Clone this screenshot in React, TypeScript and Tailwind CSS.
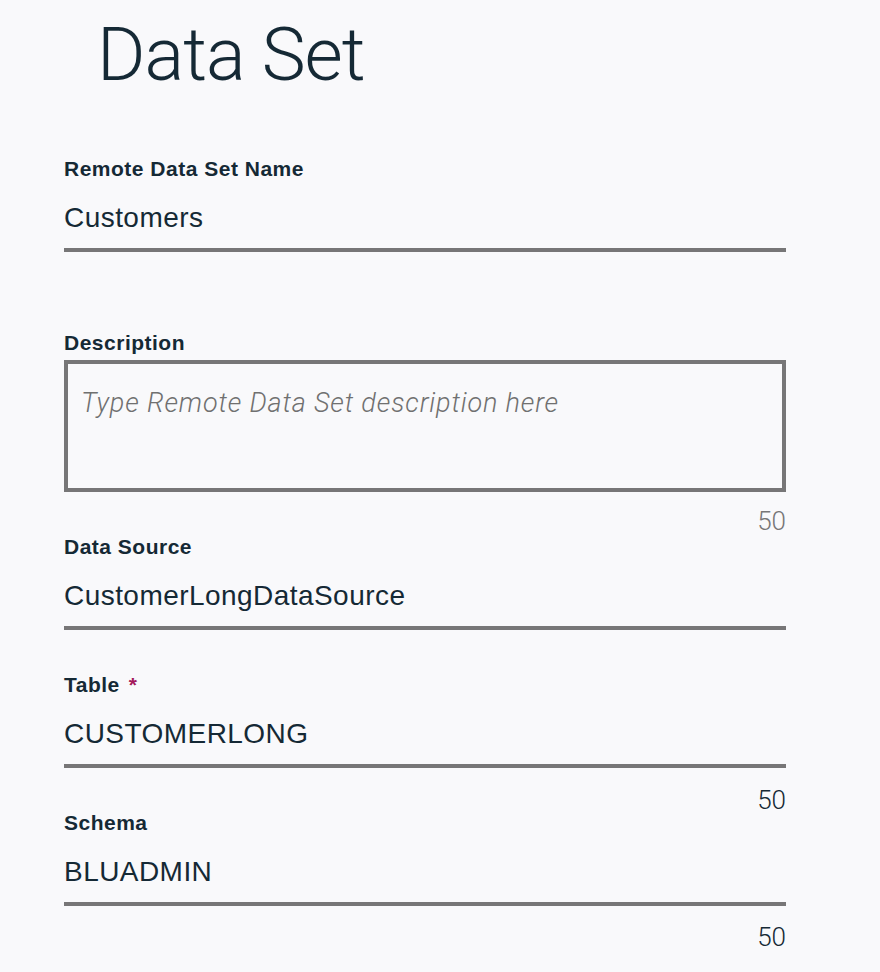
import React from "react";

const sans = "font-['Liberation_Sans',Arial,sans-serif]";
const light = "font-['Roboto','Liberation_Sans',sans-serif] font-light";

function Label({ text, required }: { text: string; required?: boolean }) {
  return (
    <div className={`${sans} h-[24px] text-[21px] leading-[24px] font-bold tracking-[0.5px] text-[#152935] whitespace-nowrap`}>
      {text}
      {required && <span className="ml-[9px] text-[#a3195b]">*</span>}
    </div>
  );
}

function Underlined({ value }: { value: string }) {
  return (
    <div className="w-[722px] pt-[21px] pb-[14px] border-b-[4px] border-[#777677]">
      <div className={`${sans} h-[32px] text-[28px] leading-[32px] tracking-[0.45px] text-[#152935] whitespace-nowrap`}>{value}</div>
    </div>
  );
}

function Counter({ grey, mt }: { grey?: boolean; mt: string }) {
  return (
    <div className={`${mt} w-[722px] h-[20px] flex justify-end`}>
      <span className={`${light} text-[26px] leading-[20px] ${grey ? "text-[#777677]" : "text-[#152935]"}`}>50</span>
    </div>
  );
}

export default function App() {
  return (
    <div className="min-h-[972px] w-[880px] bg-[#f9f9fb] pl-[64px] overflow-hidden">
      <div className="flex flex-col">
        <h1 className={`${light} pt-[15px] pl-[33px] h-[95px] text-[74px] leading-[80px] tracking-[-1px] text-[#152935] whitespace-nowrap`}>
          Data Set
        </h1>

        <div className="mt-[62px]">
          <Label text="Remote Data Set Name" />
          <Underlined value="Customers" />
        </div>

        <div className="mt-[79px]">
          <Label text="Description" />
          <div className="mt-[5px] w-[722px] h-[132px] border-[4px] border-[#777677] pl-[13px] pt-[24px]">
            <div className={`${light} italic text-[27px] leading-[30px] tracking-[0.85px] text-[#707070] whitespace-nowrap`}>
              Type Remote Data Set description here
            </div>
          </div>
          <Counter grey mt="mt-[19px]" />
        </div>

        <div className="mt-[4px]">
          <Label text="Data Source" />
          <Underlined value="CustomerLongDataSource" />
          <div className="mt-[21px] h-[20px]" />
        </div>

        <div className="mt-[2px]">
          <Label text="Table" required />
          <Underlined value="CUSTOMERLONG" />
          <Counter mt="mt-[22px]" />
        </div>

        <div className="mt-[1px]">
          <Label text="Schema" />
          <Underlined value="BLUADMIN" />
          <Counter mt="mt-[21px]" />
        </div>
      </div>
    </div>
  );
}
